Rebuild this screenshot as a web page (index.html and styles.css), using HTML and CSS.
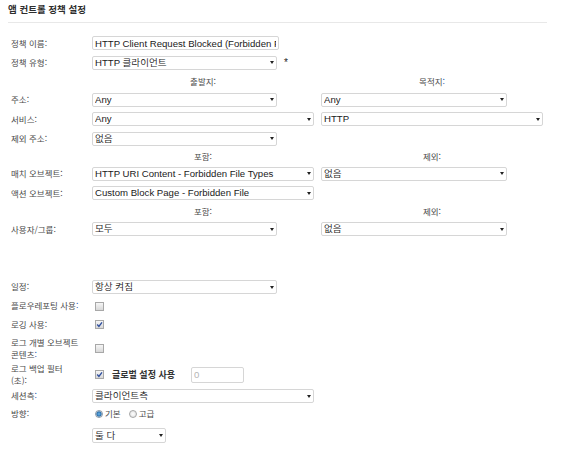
FILE: index.html
```html
<!DOCTYPE html>
<html lang="ko">
<head>
<meta charset="utf-8">
<title>앱 컨트롤 정책 설정</title>
<link rel="stylesheet" href="styles.css">
</head>
<body>
<div class="page">
  <h1 class="title">앱 컨트롤 정책 설정</h1>
  <div class="form">
    <div class="row">
      <div class="lbl">정책 이름:</div>
      <input class="box field w187" type="text" value="HTTP Client Request Blocked (Forbidden File Types)" readonly>
    </div>
    <div class="row">
      <div class="lbl">정책 유형:</div>
      <div class="box w185"><span class="txt">HTTP 클라이언트</span><span class="arr"></span></div>
      <span class="req">*</span>
    </div>
    <div class="row cap cap1">
      <div class="lbl"></div>
      <div class="col">출발지:</div>
      <div class="col colb">목적지<span class="blue">:</span></div>
    </div>
    <div class="row">
      <div class="lbl">주소:</div>
      <div class="col"><div class="box w185"><span class="txt">Any</span><span class="arr"></span></div></div>
      <div class="col colb"><div class="box w186"><span class="txt">Any</span><span class="arr"></span></div></div>
    </div>
    <div class="row">
      <div class="lbl">서비스:</div>
      <div class="col"><div class="box w222"><span class="txt">Any</span><span class="arr"></span></div></div>
      <div class="col colb"><div class="box w222"><span class="txt">HTTP</span><span class="arr"></span></div></div>
    </div>
    <div class="row">
      <div class="lbl">제외 주소:</div>
      <div class="box w185"><span class="txt">없음</span><span class="arr"></span></div>
    </div>
    <div class="row cap cap2">
      <div class="lbl"></div>
      <div class="col">포함:</div>
      <div class="col colb">제외:</div>
    </div>
    <div class="row">
      <div class="lbl">매치 오브젝트:</div>
      <div class="col"><div class="box w222"><span class="txt">HTTP URI Content - Forbidden File Types</span><span class="arr"></span></div></div>
      <div class="col colb"><div class="box w186"><span class="txt">없음</span><span class="arr"></span></div></div>
    </div>
    <div class="row">
      <div class="lbl">액션 오브젝트:</div>
      <div class="box w222"><span class="txt">Custom Block Page - Forbidden File</span><span class="arr"></span></div>
    </div>
    <div class="row cap cap3">
      <div class="lbl"></div>
      <div class="col">포함:</div>
      <div class="col colb">제외:</div>
    </div>
    <div class="row">
      <div class="lbl">사용자/그룹:</div>
      <div class="col"><div class="box w185"><span class="txt">모두</span><span class="arr"></span></div></div>
      <div class="col colb"><div class="box w186"><span class="txt">없음</span><span class="arr"></span></div></div>
    </div>

    <div class="spacer"></div>

    <div class="row h18">
      <div class="lbl">일정:</div>
      <div class="box w185"><span class="txt">항상 켜짐</span><span class="arr"></span></div>
    </div>
    <div class="row h20">
      <div class="lbl">플로우레포팅 사용<span class="blue">:</span></div>
      <span class="cb"></span>
    </div>
    <div class="row h17">
      <div class="lbl">로깅 사용:</div>
      <span class="cb"><svg viewBox="0 0 9 9" width="9" height="9"><path d="M2.2 4.6 L3.9 6.4 L7 2.3" fill="none" stroke="#2f4f9e" stroke-width="1.4"/></svg></span>
    </div>
    <div class="row h31">
      <div class="lbl two">로그 개별 오브젝트<br>콘텐츠<span class="blue">:</span></div>
      <span class="cb"></span>
    </div>
    <div class="row h21">
      <div class="lbl two">로그 백업 필터<br>(초):</div>
      <span class="cb"><svg viewBox="0 0 9 9" width="9" height="9"><path d="M2.2 4.6 L3.9 6.4 L7 2.3" fill="none" stroke="#2f4f9e" stroke-width="1.4"/></svg></span>
      <span class="strong">글로벌 설정 사용</span>
      <div class="box num"><span class="txt dim">0</span></div>
    </div>
    <div class="row h22">
      <div class="lbl">세션측<span class="blue">:</span></div>
      <div class="box w222"><span class="txt">클라이언트측</span><span class="arr"></span></div>
    </div>
    <div class="row h14">
      <div class="lbl">방향:</div>
      <span class="rd on"></span><span class="opt">기본</span>
      <span class="rd second"></span><span class="opt">고급</span>
    </div>
    <div class="row h29">
      <div class="lbl"></div>
      <div class="box w74 tall"><span class="txt">둘 다</span><span class="arr"></span></div>
    </div>
  </div>
</div>
</body>
</html>
```

FILE: styles.css
```css
* { box-sizing: border-box; }
html, body { margin: 0; padding: 0; background: #fff; }
body {
  width: 576px;
  height: 465px;
  overflow: hidden;
  font-family: "Liberation Sans", "Noto Sans CJK KR", sans-serif;
  color: #1e1e1e;
}
.page { padding-left: 8px; }
.title {
  margin: 0;
  width: 539px;
  padding: 3px 0 7px 0;
  font-family: "Noto Sans CJK KR", "Liberation Sans", sans-serif;
  font-size: 9.5px;
  line-height: 12px;
  font-weight: bold;
  color: #2e2e2e;
  border-bottom: 1px solid #e8e8e8;
}
.form { padding: 10.5px 0 0 3px; }
.row { display: flex; align-items: center; height: 19.5px; }
.cap1 { height: 17.5px; }
.cap2 { height: 15.5px; }
.cap3 { height: 16.5px; }
.h14 { height: 14px; }
.h17 { height: 17px; }
.h18 { height: 18px; }
.h20 { height: 20px; }
.h21 { height: 21px; }
.h22 { height: 22px; }
.h29 { height: 29px; }
.h31 { height: 31px; }
.spacer { height: 39px; }

.lbl {
  width: 81px;
  flex: none;
  font-family: "Noto Sans CJK KR", "Liberation Sans", sans-serif;
  font-size: 8.5px;
  line-height: 11.5px;
  color: #4a4a4a;
  white-space: nowrap;
}
.blue { color: #2d5fb0; }
.col { width: 222px; flex: none; }
.colb { margin-left: 7px; }
.cap .col {
  text-align: center;
  font-family: "Noto Sans CJK KR", "Liberation Sans", sans-serif;
  font-size: 8.5px;
  line-height: 11.5px;
  color: #4a4a4a;
}

.box {
  display: flex;
  align-items: center;
  height: 14px;
  border: 1px solid #d6d6d6;
  border-radius: 2px;
  background: #fff;
  padding: 0 2px 0 2px;
  font-size: 9.6px;
  line-height: 12px;
  color: #1a1a1a;
  font-weight: 350;
  flex: none;
}
.field {
  margin: 0;
  font-family: "Liberation Sans", "Noto Sans CJK KR", sans-serif;
  outline: none;
}
.box .txt { flex: 1; white-space: nowrap; overflow: hidden; }
.box .arr {
  flex: none;
  width: 0;
  height: 0;
  border-left: 2.5px solid transparent;
  border-right: 2.5px solid transparent;
  border-top: 3px solid #222;
}
.w74 { width: 74px; }
.w185 { width: 185px; }
.w186 { width: 186px; }
.w187 { width: 187px; }
.w222 { width: 222px; }
.tall { height: 15px; }
.num { width: 53px; height: 16px; margin-left: 16px; }
.dim { color: #b5b5b5; }

.req {
  margin-left: 7px;
  font-size: 10px;
  line-height: 10px;
  color: #222;
}

.cb {
  flex: none;
  width: 9px;
  height: 9px;
  margin-left: 3px;
  border: 1px solid #a8a8a8;
  background: linear-gradient(#f6f6f6, #d8d8d8);
  display: flex;
  align-items: center;
  justify-content: center;
  overflow: hidden;
}
.cb svg { flex: none; display: block; }

.strong {
  margin-left: 8px;
  font-family: "Noto Sans CJK KR", "Liberation Sans", sans-serif;
  font-size: 9px;
  font-weight: bold;
  color: #333;
  white-space: nowrap;
}

.rd {
  flex: none;
  width: 8px;
  height: 8px;
  margin-left: 3px;
  border-radius: 50%;
  border: 1px solid #a6a6a6;
  background: radial-gradient(circle, #ffffff 0, #dedede 4px);
}
.rd.on {
  border-color: #8a9aa8;
  background: radial-gradient(circle, #6fb6e8 0, #2c72b0 2.2px, #c9d3dc 3px);
}
.rd.second { margin-left: 8px; }
.opt {
  margin-left: 2px;
  font-family: "Noto Sans CJK KR", "Liberation Sans", sans-serif;
  font-size: 8.5px;
  line-height: 11.5px;
  color: #4a4a4a;
}
```
